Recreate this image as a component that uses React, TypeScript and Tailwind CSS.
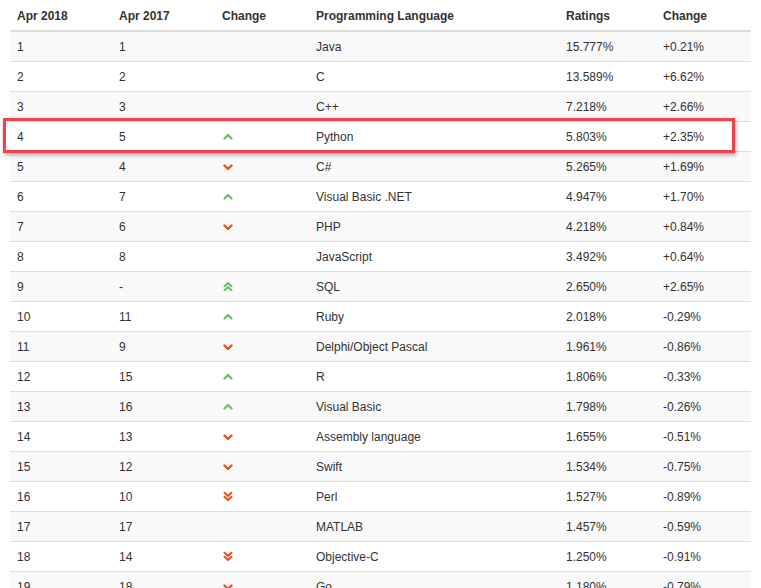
type Trend = "" | "up" | "upup" | "down" | "downdown";

const rows: [string, string, Trend, string, string, string][] = [
  ["1", "1", "", "Java", "15.777%", "+0.21%"],
  ["2", "2", "", "C", "13.589%", "+6.62%"],
  ["3", "3", "", "C++", "7.218%", "+2.66%"],
  ["4", "5", "up", "Python", "5.803%", "+2.35%"],
  ["5", "4", "down", "C#", "5.265%", "+1.69%"],
  ["6", "7", "up", "Visual Basic .NET", "4.947%", "+1.70%"],
  ["7", "6", "down", "PHP", "4.218%", "+0.84%"],
  ["8", "8", "", "JavaScript", "3.492%", "+0.64%"],
  ["9", "-", "upup", "SQL", "2.650%", "+2.65%"],
  ["10", "11", "up", "Ruby", "2.018%", "-0.29%"],
  ["11", "9", "down", "Delphi/Object Pascal", "1.961%", "-0.86%"],
  ["12", "15", "up", "R", "1.806%", "-0.33%"],
  ["13", "16", "up", "Visual Basic", "1.798%", "-0.26%"],
  ["14", "13", "down", "Assembly language", "1.655%", "-0.51%"],
  ["15", "12", "down", "Swift", "1.534%", "-0.75%"],
  ["16", "10", "downdown", "Perl", "1.527%", "-0.89%"],
  ["17", "17", "", "MATLAB", "1.457%", "-0.59%"],
  ["18", "14", "downdown", "Objective-C", "1.250%", "-0.91%"],
  ["19", "18", "down", "Go", "1.180%", "-0.79%"],
];

const cols = "grid grid-cols-[101px_103px_94px_250px_97px_97px]";

export default function App() {
  return (
    <div
      className="relative bg-white px-[10px] text-[12px] text-[#333]"
      style={{ fontFamily: '"Liberation Sans", Arial, sans-serif' }}
    >
      <div className={`${cols} h-[32px] items-center border-b-2 border-[#ddd] pt-[2px] font-bold`}>
        <div className="pl-[7px]">Apr 2018</div>
        <div className="pl-[8px]">Apr 2017</div>
        <div className="pl-[8px]">Change</div>
        <div className="pl-[8px]">Programming Language</div>
        <div className="pl-[8px]">Ratings</div>
        <div className="pl-[8px]">Change</div>
      </div>

      {rows.map((r, i) => (
        <div
          key={r[0]}
          className={`${cols} items-center ${i === 0 ? "h-[29px]" : "h-[30px] border-t border-[#ddd]"} ${
            i % 2 === 0 ? "bg-[#f9f9f9]" : "bg-white"
          }`}
        >
          <div className="pl-[7px]">{r[0]}</div>
          <div className="pl-[8px]">{r[1]}</div>
          <div className="flex pl-[9px]">
            <TrendIcon trend={r[2]} />
          </div>
          <div className="pl-[8px]">{r[3]}</div>
          <div className="pl-[8px]">{r[4]}</div>
          <div className="pl-[8px]">{r[5]}</div>
        </div>
      ))}

      {/* highlight around Python */}
      <div className="absolute left-[3px] top-[118px] h-[35px] w-[732px] border-[3px] border-[#f2424a] shadow-[1px_2px_4px_rgba(0,0,0,0.35)]" />
    </div>
  );
}

// ── Icons ─────────────────────────────────────────────────────────

function TrendIcon({ trend }: { trend: Trend }) {
  if (!trend) return null;
  const up = trend === "up" || trend === "upup";
  const double = trend === "upup" || trend === "downdown";
  const color = up ? "#6fbf6f" : "#e9531f";
  const single = up ? "M1.5 6.5 L5 3 L8.5 6.5" : "M1.5 3.5 L5 7 L8.5 3.5";
  if (!double) {
    return (
      <svg aria-hidden="true" width="10" height="10" viewBox="0 0 10 10" fill="none">
        <path d={single} stroke={color} strokeWidth={2.4} strokeLinecap="round" strokeLinejoin="round" />
      </svg>
    );
  }
  const paths = up
    ? ["M1.5 5 L5 1.8 L8.5 5", "M1.5 9 L5 5.8 L8.5 9"]
    : ["M1.5 1.5 L5 4.7 L8.5 1.5", "M1.5 5.5 L5 8.7 L8.5 5.5"];
  return (
    <svg aria-hidden="true" width="10" height="11" viewBox="0 0 10 10.5" fill="none">
      {paths.map((d) => (
        <path key={d} d={d} stroke={color} strokeWidth={2.1} strokeLinecap="round" strokeLinejoin="round" />
      ))}
    </svg>
  );
}
